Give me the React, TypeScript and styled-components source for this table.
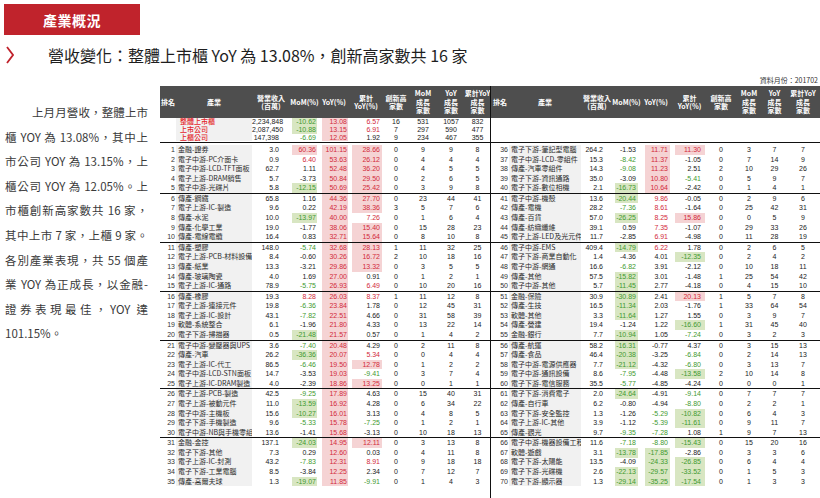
import React from 'react';
import styled, { createGlobalStyle } from 'styled-components';

const CJK = `"Noto Sans CJK TC", "Noto Sans CJK SC", sans-serif`;
const NUM = `"Liberation Sans Narrow", "Liberation Sans", Arial, sans-serif`;

const GlobalStyle = createGlobalStyle`
  html, body { margin: 0; padding: 0; background: #fff; }
  body { font-family: ${CJK}; color: #222; }
`;

type Tone = 'posBg' | 'pos' | 'negBg' | 'neg' | 'none';
const toneOf = (v: number): Tone =>
  v >= 10 ? 'posBg' : v >= 5 ? 'pos' : v <= -10 ? 'negBg' : v <= -5 ? 'neg' : 'none';
const toneBg: Record<Tone, string> = {
  posBg: '#f5d3d4',
  pos: 'transparent',
  negBg: '#d8e6c2',
  neg: 'transparent',
  none: 'transparent',
};
const toneFg: Record<Tone, string> = {
  posBg: '#d22a3a',
  pos: '#d22a3a',
  negBg: '#3f9a2f',
  neg: '#3f9a2f',
  none: '#222',
};

type DataRow = [number, string, number, number, number, number, number, number, number, number];

const leftRows: DataRow[] = [
  [1, '金融-證券', 3.0, 60.36, 101.15, 28.66, 0, 9, 9, 8],
  [2, '電子中游-PC介面卡', 0.9, 6.4, 53.63, 26.12, 0, 4, 4, 4],
  [3, '電子中游-LCD-TFT面板', 62.7, 1.11, 52.48, 36.2, 0, 4, 5, 5],
  [4, '電子上游-DRAM銷售', 5.7, -3.73, 50.84, 29.5, 0, 2, 6, 5],
  [5, '電子中游-光碟片', 5.8, -12.15, 50.69, 25.42, 0, 3, 9, 8],
  [6, '傳產-鋼鐵', 65.8, 1.16, 44.36, 27.7, 0, 23, 44, 41],
  [7, '電子上游-IC-製造', 9.6, 0.22, 42.19, 38.36, 3, 5, 7, 6],
  [8, '傳產-水泥', 10.0, -13.97, 40.0, 7.26, 0, 1, 6, 4],
  [9, '傳產-化學工業', 19.0, -1.77, 38.06, 15.4, 0, 15, 28, 23],
  [10, '傳產-電線電纜', 16.4, 0.83, 32.71, 15.64, 0, 8, 10, 8],
  [11, '傳產-塑膠', 148.0, -5.74, 32.68, 28.13, 1, 11, 32, 25],
  [12, '電子上游-PCB-材料設備', 8.4, -0.6, 30.26, 16.72, 2, 10, 18, 16],
  [13, '傳產-紙業', 13.3, -3.21, 29.86, 13.32, 0, 3, 5, 5],
  [14, '傳產-玻璃陶瓷', 4.0, 1.69, 27.0, 0.91, 0, 1, 2, 1],
  [15, '電子上游-IC-通路', 78.9, -5.75, 26.93, 6.49, 0, 10, 20, 16],
  [16, '傳產-橡膠', 19.3, 8.28, 26.03, 8.37, 1, 11, 12, 8],
  [17, '電子上游-連接元件', 19.8, -6.36, 23.84, 1.78, 0, 12, 45, 31],
  [18, '電子上游-IC-設計', 43.1, -7.82, 22.51, 4.66, 0, 31, 58, 39],
  [19, '軟體-系統整合', 6.1, -1.96, 21.8, 4.33, 0, 13, 22, 14],
  [20, '電子下游-掃描器', 0.5, -21.48, 21.57, 0.57, 0, 1, 4, 2],
  [21, '電子中游-變壓器與UPS', 3.6, -7.4, 20.48, 4.29, 0, 2, 11, 8],
  [22, '傳產-汽車', 26.2, -36.36, 20.07, 5.34, 0, 0, 4, 4],
  [23, '電子上游-IC-代工', 86.5, -6.46, 19.5, 12.78, 0, 1, 2, 2],
  [24, '電子中游-LCD-STN面板', 14.7, -3.53, 19.03, -9.41, 0, 3, 7, 4],
  [25, '電子上游-IC-DRAM製造', 4.0, -2.39, 18.86, 13.25, 0, 0, 1, 1],
  [26, '電子上游-PCB-製造', 42.5, -9.25, 17.89, 4.63, 0, 15, 40, 31],
  [27, '電子上游-被動元件', 11.0, -13.59, 16.92, 4.28, 0, 6, 34, 22],
  [28, '電子中游-主機板', 15.6, -10.27, 16.01, 3.13, 0, 4, 8, 5],
  [29, '電子下游-手機製造', 9.6, -5.33, 15.78, -7.25, 0, 1, 2, 1],
  [30, '電子中游-NB與手機零組件', 13.6, -1.41, 15.68, -3.13, 0, 10, 18, 13],
  [31, '金融-金控', 137.1, -24.03, 14.95, 12.11, 0, 3, 13, 8],
  [32, '電子下游-其他', 7.3, 0.29, 12.6, 0.03, 0, 4, 11, 8],
  [33, '電子上游-IC-封測', 43.2, -7.83, 12.31, 8.91, 0, 9, 18, 18],
  [34, '電子下游-工業電腦', 8.5, -3.84, 12.25, 2.34, 0, 7, 12, 7],
  [35, '傳產-高爾夫球', 1.3, -19.07, 11.85, -9.91, 0, 1, 4, 3],
];

const rightRows: DataRow[] = [
  [36, '電子下游-筆記型電腦', 264.2, -1.53, 11.71, 11.3, 0, 3, 7, 7],
  [37, '電子中游-LCD-零組件', 15.3, -8.42, 11.37, -1.05, 0, 7, 14, 9],
  [38, '傳產-汽車零組件', 14.3, -9.08, 11.23, 2.51, 2, 10, 29, 26],
  [39, '電子下游-資訊通路', 35.0, -3.09, 10.8, -5.41, 0, 5, 9, 7],
  [40, '電子下游-數位相機', 2.1, -16.73, 10.64, -2.42, 0, 1, 4, 1],
  [41, '電子中游-機殼', 13.6, -20.44, 9.86, -0.05, 0, 2, 9, 6],
  [42, '傳產-電機', 28.2, -7.36, 8.61, -1.64, 0, 25, 42, 31],
  [43, '傳產-百貨', 57.0, -26.25, 8.25, 15.86, 0, 0, 5, 9],
  [44, '傳產-紡織纖維', 39.1, 0.59, 7.35, -1.07, 0, 29, 33, 26],
  [45, '電子上游-LED及光元件', 11.7, -2.85, 6.91, -4.98, 0, 11, 28, 19],
  [46, '電子中游-EMS', 409.4, -14.79, 6.22, 1.78, 0, 2, 6, 5],
  [47, '電子下游-商業自動化', 1.4, -4.36, 4.01, -12.35, 0, 2, 4, 2],
  [48, '電子中游-網通', 16.6, -6.82, 3.91, -2.12, 0, 10, 18, 11],
  [49, '傳產-其他', 57.5, -15.82, 3.01, -1.48, 1, 25, 54, 42],
  [50, '電子中游-其他', 5.7, -11.45, 2.77, -4.18, 0, 4, 15, 10],
  [51, '金融-保險', 30.9, -30.89, 2.41, 20.13, 1, 5, 7, 8],
  [52, '傳產-生技', 16.5, -11.34, 2.03, -1.76, 1, 33, 64, 54],
  [53, '軟體-其他', 3.3, -11.64, 1.27, 1.55, 0, 3, 9, 7],
  [54, '傳產-營建', 19.4, -1.24, 1.22, -16.6, 1, 31, 45, 40],
  [55, '金融-銀行', 7.7, -10.94, 1.05, -7.24, 0, 3, 2, 3],
  [56, '傳產-航運', 58.2, -16.31, -0.77, 4.37, 0, 3, 15, 13],
  [57, '傳產-食品', 46.4, -20.38, -3.25, -6.84, 0, 2, 14, 13],
  [58, '電子中游-電源供應器', 7.7, -21.12, -4.32, -6.8, 0, 3, 13, 7],
  [59, '電子中游-通訊設備', 8.6, -7.95, -4.48, -13.58, 2, 10, 14, 8],
  [60, '電子下游-電信服務', 35.5, -5.77, -4.85, -4.24, 0, 0, 0, 1],
  [61, '電子下游-消費電子', 2.0, -24.64, -4.91, -9.14, 0, 7, 7, 7],
  [62, '傳產-自行車', 6.2, -0.8, -4.94, -8.8, 0, 2, 2, 1],
  [63, '電子下游-安全監控', 1.3, -1.26, -5.29, -10.82, 0, 6, 4, 3],
  [64, '電子上游-IC-其他', 3.9, -1.12, -5.39, -11.61, 0, 9, 11, 7],
  [65, '傳產-觀光', 9.7, -9.35, -7.28, 1.08, 1, 9, 7, 13],
  [66, '電子中游-機器設備工程', 11.6, -7.18, -8.8, -15.43, 0, 15, 20, 16],
  [67, '軟體-遊戲', 3.1, -13.78, -17.85, -2.86, 0, 3, 3, 6],
  [68, '電子下游-太陽能', 13.5, -4.09, -24.33, -26.85, 0, 6, 4, 4],
  [69, '電子下游-光碟機', 2.6, -22.13, -29.57, -33.52, 0, 1, 5, 3],
  [70, '電子下游-顯示器', 1.3, -29.14, -35.25, -17.54, 0, 1, 3, 3],
];

type SummaryRow = [string, string, number, number, number, number, number, number, number];
const summaryRows: SummaryRow[] = [
  ['整體上市櫃', '2,234,848', -10.62, 13.08, 6.57, 16, 531, 1057, 832],
  ['上市公司', '2,087,450', -10.88, 13.15, 6.91, 7, 297, 590, 477],
  ['上櫃公司', '147,398', -6.69, 12.05, 1.92, 9, 234, 467, 355],
];

const paraLines = [
  '上月月營收，整體上市',
  '櫃 YOY 為 13.08%，其中上',
  '市公司 YOY 為 13.15%，上',
  '櫃公司 YOY 為 12.05%。上',
  '市櫃創新高家數共 16 家，',
  '其中上市 7 家，上櫃 9 家。',
  '各別產業表現，共 55 個產',
  '業 YOY 為正成長，以金融-',
  '證券表現最佳，YOY 達',
  '101.15%。',
];

type Inset = { ml: number; mr: number; pr: number };
type SideConfig = { cols: string; revPr: number; pct: Inset[] };

const LEFT: SideConfig = {
  cols: '16px 76px 38px 29px 30px 34px 26px 28px 28px 25px',
  revPr: 11,
  pct: [
    { ml: 2, mr: 2, pr: 1 },
    { ml: 3, mr: 1, pr: 1 },
    { ml: 3, mr: 1, pr: 2 },
  ],
};

const RIGHT: SideConfig = {
  cols: '18px 72px 32px 27px 32px 35px 28px 28px 23px 34px',
  revPr: 10,
  pct: [
    { ml: 2, mr: 2, pr: 2 },
    { ml: 5, mr: 2, pr: 2 },
    { ml: 3, mr: 2, pr: 4 },
  ],
};

const ROW_H = 9.59;
const SUM_H = 7.8;

const Page = styled.div`
  width: 820px;
  height: 498px;
  overflow: hidden;
  display: flex;
  flex-direction: column;
  background: #fff;
`;

const Tab = styled.div`
  margin: 4px 0 0 4px;
  width: 136px;
  height: 31px;
  background: #c0232c;
  color: #fff;
  display: flex;
  align-items: center;
  justify-content: center;
  font-family: ${CJK};
  font-weight: 700;
  font-size: 14px;
  letter-spacing: 0.5px;
`;

const TitleRow = styled.div`
  height: 40px;
  display: flex;
  align-items: center;
  padding-left: 6px;
  gap: 34px;
`;

const Chevron = styled.svg`
  width: 8px;
  height: 18px;
  flex: none;
`;

const Title = styled.h1`
  margin: 0;
  font-family: ${CJK};
  font-weight: 400;
  font-size: 16px;
  color: #1e1e1e;
  white-space: nowrap;
`;

const Content = styled.div`
  height: 423px;
  display: flex;
`;

const Aside = styled.div`
  width: 160px;
  box-sizing: border-box;
  padding: 25px 12px 0 5px;
  font-family: ${CJK};
  font-size: 11.5px;
  line-height: 24.6px;
  color: #3a3a3a;
`;

const ParaLine = styled.div<{ $indent?: boolean; $last?: boolean }>`
  white-space: nowrap;
  text-align: justify;
  text-align-last: ${(p) => (p.$last ? 'left' : 'justify')};
  padding-left: ${(p) => (p.$indent ? '27px' : '0')};
`;

const TableArea = styled.div`
  width: 660px;
  display: flex;
  flex-direction: column;
`;

const Note = styled.div`
  height: 11px;
  line-height: 11px;
  text-align: right;
  padding-right: 2px;
  font-family: ${CJK};
  font-size: 7px;
  color: #333;
`;

const Body = styled.div`
  flex: 1;
  display: flex;
`;

const Half = styled.div<{ $divider?: boolean }>`
  width: 330px;
  box-sizing: border-box;
  display: flex;
  flex-direction: column;
  border-left: ${(p) => (p.$divider ? '1px solid #111' : 'none')};
`;

const Head = styled.div<{ $cols: string }>`
  height: 32px;
  flex: none;
  display: grid;
  grid-template-columns: ${(p) => p.$cols};
  background: #4e4e4e;
  color: #fff;
  font-family: ${CJK};
  font-weight: 700;
  font-size: 7px;
  line-height: 8.5px;
`;

const HeadCell = styled.div`
  display: flex;
  align-items: center;
  justify-content: center;
  text-align: center;
  white-space: nowrap;
`;

const SummaryBlock = styled.div`
  height: ${SUM_H * 3}px;
  flex: none;
  display: flex;
  flex-direction: column;
`;

const Rule = styled.div<{ $first?: boolean }>`
  height: 1px;
  background: #111;
  margin: ${(p) => (p.$first ? '0.6px 0 2px' : '0')};
  flex: none;
`;

const Row = styled.div<{ $cols: string; $h: number }>`
  display: grid;
  grid-template-columns: ${(p) => p.$cols};
  height: ${(p) => p.$h}px;
  line-height: ${(p) => p.$h}px;
  font-size: 7px;
  flex: none;
`;

const Rank = styled.div`
  font-family: ${NUM};
  text-align: right;
  padding-right: 1px;
  color: #333;
`;

const Name = styled.div<{ $red?: boolean }>`
  font-family: ${CJK};
  background: #f1f1f1;
  padding-left: ${(p) => (p.$red ? '4px' : '2px')};
  white-space: nowrap;
  overflow-x: ${(p) => (p.$red ? 'visible' : 'clip')};
  color: ${(p) => (p.$red ? '#e41f2b' : '#2a2a2a')};
  font-weight: ${(p) => (p.$red ? 500 : 400)};
`;

const Rev = styled.div<{ $pr: number }>`
  font-family: ${NUM};
  text-align: right;
  padding-right: ${(p) => p.$pr}px;
  color: #222;
`;

const Pct = styled.div<{ $tone: Tone; $inset: Inset }>`
  font-family: ${NUM};
  text-align: right;
  margin: 0 ${(p) => p.$inset.mr}px 0 ${(p) => p.$inset.ml}px;
  padding-right: ${(p) => p.$inset.pr}px;
  background: ${(p) => toneBg[p.$tone]};
  color: ${(p) => toneFg[p.$tone]};
`;

const Count = styled.div`
  font-family: ${NUM};
  text-align: center;
  color: #222;
`;

const headers: React.ReactNode[] = [
  '排名',
  '產業',
  <>營業收入<br />(百萬)</>,
  'MoM(%)',
  'YoY(%)',
  <>累計<br />YoY(%)</>,
  <>創新高<br />家數</>,
  <>MoM<br />成長<br />家數</>,
  <>YoY<br />成長<br />家數</>,
  <>累計YoY<br />成長<br />家數</>,
];

const Header: React.FC<{ cfg: SideConfig }> = ({ cfg }) => (
  <Head $cols={cfg.cols}>
    {headers.map((h, i) => (
      <HeadCell key={i}>{h}</HeadCell>
    ))}
  </Head>
);

const PctCells: React.FC<{ vals: number[]; cfg: SideConfig }> = ({ vals, cfg }) => (
  <>
    {vals.map((v, i) => (
      <Pct key={i} $tone={toneOf(v)} $inset={cfg.pct[i]}>
        {v.toFixed(2)}
      </Pct>
    ))}
  </>
);

const DataLines: React.FC<{ rows: DataRow[]; cfg: SideConfig }> = ({ rows, cfg }) => (
  <>
    {rows.map((r, i) => (
      <React.Fragment key={r[0]}>
        {i > 0 && i % 5 === 0 && <Rule />}
        <Row $cols={cfg.cols} $h={ROW_H}>
          <Rank>{r[0]}</Rank>
          <Name>{r[1]}</Name>
          <Rev $pr={cfg.revPr}>{r[2].toFixed(1)}</Rev>
          <PctCells vals={[r[3], r[4], r[5]]} cfg={cfg} />
          <Count>{r[6]}</Count>
          <Count>{r[7]}</Count>
          <Count>{r[8]}</Count>
          <Count>{r[9]}</Count>
        </Row>
      </React.Fragment>
    ))}
  </>
);

const Summary: React.FC<{ cfg: SideConfig }> = ({ cfg }) => (
  <SummaryBlock>
    {summaryRows.map((s) => (
      <Row key={s[0]} $cols={cfg.cols} $h={SUM_H}>
        <Rank />
        <Name $red>{s[0]}</Name>
        <Rev $pr={cfg.revPr}>{s[1]}</Rev>
        <PctCells vals={[s[2], s[3], s[4]]} cfg={cfg} />
        <Count>{s[5]}</Count>
        <Count>{s[6]}</Count>
        <Count>{s[7]}</Count>
        <Count>{s[8]}</Count>
      </Row>
    ))}
  </SummaryBlock>
);

export default function App() {
  return (
    <>
      <GlobalStyle />
      <Page>
        <Tab>產業概況</Tab>
        <TitleRow>
          <Chevron viewBox="0 0 8 18">
            <polyline points="1,1 7,9 1,17" fill="none" stroke="#c0232c" strokeWidth="1.8" />
          </Chevron>
          <Title>營收變化：整體上市櫃 YoY 為 13.08%，創新高家數共 16 家</Title>
        </TitleRow>
        <Content>
          <Aside>
            {paraLines.map((l, i) => (
              <ParaLine key={i} $indent={i === 0} $last={i === paraLines.length - 1}>
                {l}
              </ParaLine>
            ))}
          </Aside>
          <TableArea>
            <Note>資料月份：201702</Note>
            <Body>
              <Half>
                <Header cfg={LEFT} />
                <Summary cfg={LEFT} />
                <Rule $first />
                <DataLines rows={leftRows} cfg={LEFT} />
              </Half>
              <Half $divider>
                <Header cfg={RIGHT} />
                <SummaryBlock />
                <Rule $first />
                <DataLines rows={rightRows} cfg={RIGHT} />
              </Half>
            </Body>
          </TableArea>
        </Content>
      </Page>
    </>
  );
}
